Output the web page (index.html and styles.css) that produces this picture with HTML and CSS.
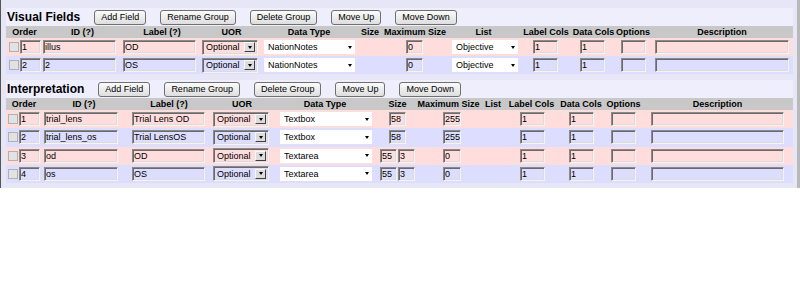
FILE: index.html
```html
<!DOCTYPE html>
<html>
<head>
<meta charset="utf-8">
<title>Layout Editor</title>
<link rel="stylesheet" href="styles.css">
</head>
<body>
<div class="frame">
  <div class="group">
    <div class="group-head">
      <span class="group-title">Visual Fields</span>
      <button class="btn">Add Field</button>
      <button class="btn">Rename Group</button>
      <button class="btn">Delete Group</button>
      <button class="btn">Move Up</button>
      <button class="btn">Move Down</button>
    </div>
    <table class="fields vf">
      <thead>
        <tr>
          <th class="c-ord">Order</th><th class="c-id">ID (?)</th><th class="c-label">Label (?)</th><th class="c-uor">UOR</th><th class="c-type">Data Type</th><th class="c-size">Size</th><th class="c-max">Maximum Size</th><th class="c-list">List</th><th class="c-lcols">Label Cols</th><th class="c-dcols">Data Cols</th><th class="c-opts">Options</th><th class="c-desc">Description</th>
        </tr>
      </thead>
      <tbody>
        <tr class="row-a">
          <td class="c-ord"><input type="checkbox" class="chk"><input class="in in-ord" value="1"></td>
          <td class="c-id"><input class="in in-id" value="illus"></td>
          <td class="c-label"><input class="in in-label" value="OD"></td>
          <td class="c-uor"><span class="combo"><select class="combo-sel"><option>Optional</option></select><span class="combo-btn"><span class="tri"></span></span></span></td>
          <td class="c-type"><span class="dd dd-type"><select class="dd-sel"><option>NationNotes</option></select><span class="tri"></span></span></td>
          <td class="c-size"></td>
          <td class="c-max"><input class="in in-max" value="0"></td>
          <td class="c-list"><span class="dd dd-list"><select class="dd-sel"><option>Objective</option></select><span class="tri"></span></span></td>
          <td class="c-lcols"><input class="in in-small" value="1"></td>
          <td class="c-dcols"><input class="in in-small" value="1"></td>
          <td class="c-opts"><input class="in in-small" value=""></td>
          <td class="c-desc"><input class="in in-desc" value=""></td>
        </tr>
        <tr class="row-b">
          <td class="c-ord"><input type="checkbox" class="chk"><input class="in in-ord" value="2"></td>
          <td class="c-id"><input class="in in-id" value="2"></td>
          <td class="c-label"><input class="in in-label" value="OS"></td>
          <td class="c-uor"><span class="combo"><select class="combo-sel"><option>Optional</option></select><span class="combo-btn"><span class="tri"></span></span></span></td>
          <td class="c-type"><span class="dd dd-type"><select class="dd-sel"><option>NationNotes</option></select><span class="tri"></span></span></td>
          <td class="c-size"></td>
          <td class="c-max"><input class="in in-max" value="0"></td>
          <td class="c-list"><span class="dd dd-list"><select class="dd-sel"><option>Objective</option></select><span class="tri"></span></span></td>
          <td class="c-lcols"><input class="in in-small" value="1"></td>
          <td class="c-dcols"><input class="in in-small" value="1"></td>
          <td class="c-opts"><input class="in in-small" value=""></td>
          <td class="c-desc"><input class="in in-desc" value=""></td>
        </tr>
      </tbody>
    </table>
  </div>

  <div class="group group-second">
    <div class="group-head">
      <span class="group-title">Interpretation</span>
      <button class="btn">Add Field</button>
      <button class="btn">Rename Group</button>
      <button class="btn">Delete Group</button>
      <button class="btn">Move Up</button>
      <button class="btn">Move Down</button>
    </div>
    <table class="fields ip">
      <thead>
        <tr>
          <th class="c-ord">Order</th><th class="c-id">ID (?)</th><th class="c-label">Label (?)</th><th class="c-uor">UOR</th><th class="c-type">Data Type</th><th class="c-size">Size</th><th class="c-max">Maximum Size</th><th class="c-list">List</th><th class="c-lcols">Label Cols</th><th class="c-dcols">Data Cols</th><th class="c-opts">Options</th><th class="c-desc">Description</th>
        </tr>
      </thead>
      <tbody>
        <tr class="row-a">
          <td class="c-ord"><input type="checkbox" class="chk"><input class="in in-ord" value="1"></td>
          <td class="c-id"><input class="in in-id" value="trial_lens"></td>
          <td class="c-label"><input class="in in-label" value="Trial Lens OD"></td>
          <td class="c-uor"><span class="combo"><select class="combo-sel"><option>Optional</option></select><span class="combo-btn"><span class="tri"></span></span></span></td>
          <td class="c-type"><span class="dd dd-type"><select class="dd-sel"><option>Textbox</option></select><span class="tri"></span></span></td>
          <td class="c-size"><input class="in in-size" value="58"></td>
          <td class="c-max"><input class="in in-max" value="255"></td>
          <td class="c-list"></td>
          <td class="c-lcols"><input class="in in-small" value="1"></td>
          <td class="c-dcols"><input class="in in-small" value="1"></td>
          <td class="c-opts"><input class="in in-small" value=""></td>
          <td class="c-desc"><input class="in in-desc" value=""></td>
        </tr>
        <tr class="row-b">
          <td class="c-ord"><input type="checkbox" class="chk"><input class="in in-ord" value="2"></td>
          <td class="c-id"><input class="in in-id" value="trial_lens_os"></td>
          <td class="c-label"><input class="in in-label" value="Trial LensOS"></td>
          <td class="c-uor"><span class="combo"><select class="combo-sel"><option>Optional</option></select><span class="combo-btn"><span class="tri"></span></span></span></td>
          <td class="c-type"><span class="dd dd-type"><select class="dd-sel"><option>Textbox</option></select><span class="tri"></span></span></td>
          <td class="c-size"><input class="in in-size" value="58"></td>
          <td class="c-max"><input class="in in-max" value="255"></td>
          <td class="c-list"></td>
          <td class="c-lcols"><input class="in in-small" value="1"></td>
          <td class="c-dcols"><input class="in in-small" value="1"></td>
          <td class="c-opts"><input class="in in-small" value=""></td>
          <td class="c-desc"><input class="in in-desc" value=""></td>
        </tr>
        <tr class="row-a">
          <td class="c-ord"><input type="checkbox" class="chk"><input class="in in-ord" value="3"></td>
          <td class="c-id"><input class="in in-id" value="od"></td>
          <td class="c-label"><input class="in in-label" value="OD"></td>
          <td class="c-uor"><span class="combo"><select class="combo-sel"><option>Optional</option></select><span class="combo-btn"><span class="tri"></span></span></span></td>
          <td class="c-type"><span class="dd dd-type"><select class="dd-sel"><option>Textarea</option></select><span class="tri"></span></span></td>
          <td class="c-size"><span class="size-pair"><input class="in in-size" value="55"><input class="in in-size" value="3"></span></td>
          <td class="c-max"><input class="in in-max" value="0"></td>
          <td class="c-list"></td>
          <td class="c-lcols"><input class="in in-small" value="1"></td>
          <td class="c-dcols"><input class="in in-small" value="1"></td>
          <td class="c-opts"><input class="in in-small" value=""></td>
          <td class="c-desc"><input class="in in-desc" value=""></td>
        </tr>
        <tr class="row-b">
          <td class="c-ord"><input type="checkbox" class="chk"><input class="in in-ord" value="4"></td>
          <td class="c-id"><input class="in in-id" value="os"></td>
          <td class="c-label"><input class="in in-label" value="OS"></td>
          <td class="c-uor"><span class="combo"><select class="combo-sel"><option>Optional</option></select><span class="combo-btn"><span class="tri"></span></span></span></td>
          <td class="c-type"><span class="dd dd-type"><select class="dd-sel"><option>Textarea</option></select><span class="tri"></span></span></td>
          <td class="c-size"><span class="size-pair"><input class="in in-size" value="55"><input class="in in-size" value="3"></span></td>
          <td class="c-max"><input class="in in-max" value="0"></td>
          <td class="c-list"></td>
          <td class="c-lcols"><input class="in in-small" value="1"></td>
          <td class="c-dcols"><input class="in in-small" value="1"></td>
          <td class="c-opts"><input class="in in-small" value=""></td>
          <td class="c-desc"><input class="in in-desc" value=""></td>
        </tr>
      </tbody>
    </table>
  </div>
</div>
</body>
</html>
```

FILE: styles.css
```css
* { box-sizing: border-box; }

body {
  margin: 0;
  background: #ffffff;
  font-family: "Liberation Sans", Arial, sans-serif;
  color: #000;
}

.frame {
  width: 800px;
  background: #e6e6f6;
  border-left: 1px solid #555;
  border-right: 3px solid #b8b8b8;
  padding: 8px 4px 5px 5px;
}

.group {
  background: #eeeefc;
}

.group-second {
  margin-top: 6px;
}

.group-head {
  display: flex;
  align-items: center;
  height: 18px;
  padding-left: 1px;
  gap: 14px;
}

.group-title {
  font-weight: bold;
  font-size: 12px;
  line-height: 14px;
}

.btn {
  height: 15px;
  padding: 0 6px;
  border: 1px solid #707070;
  border-radius: 3px;
  background: linear-gradient(#fbfbfb, #dedede);
  font-family: "Liberation Sans", Arial, sans-serif;
  font-size: 9px;
  line-height: 13px;
  color: #000;
}

.fields {
  border-collapse: collapse;
  table-layout: fixed;
  width: 787px;
}

.fields th {
  background: #c8c8c8;
  font-size: 9px;
  font-weight: bold;
  height: 12px;
  padding: 0;
  text-align: center;
  white-space: nowrap;
  line-height: 12px;
}

.fields td {
  height: 18px;
  padding: 0;
  text-align: left;
  white-space: nowrap;
  vertical-align: middle;
  font-size: 0;
}

.ip td { height: 18.25px; }

.row-a { background: #ffdddd; }
.row-b { background: #ddddff; }

/* inputs */
.in {
  display: inline-block;
  vertical-align: middle;
  height: 14px;
  margin: 0;
  padding: 0 0 0 1px;
  border: 1px solid;
  border-color: #8a8a8a #f4f4f4 #f4f4f4 #8a8a8a;
  box-shadow: inset 1px 1px 0 #6a6a6a, inset -1px -1px 0 #dcdcdc;
  background: transparent;
  font-family: "Liberation Sans", Arial, sans-serif;
  font-size: 9px;
  line-height: 12px;
  color: #000;
  outline: none;
}

.chk {
  -webkit-appearance: none;
  appearance: none;
  display: inline-block;
  vertical-align: middle;
  width: 10px;
  height: 10px;
  margin: 0 1px 0 0;
  border: 1px solid #b0b0b0;
  background: #e2e2e2;
}

.in-ord { width: 21px; }
.in-id { width: 73px; }
.in-label { width: 73px; }
.in-max { width: 17px; }
.in-small { width: 25px; }
.in-desc { width: 134px; }
.in-size { width: 17px; }

.size-pair { display: inline-flex; gap: 1px; vertical-align: middle; }

/* combo (UOR) */
.combo {
  display: inline-flex;
  align-items: center;
  vertical-align: middle;
  width: 56px;
  height: 15px;
  border: 1px solid;
  border-color: #8a8a8a #f4f4f4 #f4f4f4 #8a8a8a;
  box-shadow: inset 1px 1px 0 #6a6a6a, inset -1px -1px 0 #dcdcdc;
  padding: 1px 2px 1px 1px;
}

.combo-sel {
  -webkit-appearance: none;
  appearance: none;
  flex: 1;
  min-width: 0;
  height: 12px;
  border: 0;
  background: transparent;
  padding: 0 0 0 2px;
  margin: 0;
  font-family: "Liberation Sans", Arial, sans-serif;
  font-size: 9px;
  line-height: 12px;
  color: #000;
}

.combo-btn {
  display: flex;
  align-items: center;
  justify-content: center;
  width: 11px;
  height: 10px;
  border: 1px solid;
  border-color: #f8f8f8 #404040 #404040 #f8f8f8;
  background: #dcdcdc;
}

.tri {
  display: inline-block;
  width: 0;
  height: 0;
  border-left: 2.5px solid transparent;
  border-right: 2.5px solid transparent;
  border-top: 3px solid #000;
}

/* plain white dropdowns */
.dd {
  display: inline-flex;
  align-items: center;
  vertical-align: middle;
  height: 14px;
  background: #fff;
  padding-right: 3px;
}

.dd-sel {
  -webkit-appearance: none;
  appearance: none;
  flex: 1;
  min-width: 0;
  height: 14px;
  border: 0;
  background: transparent;
  padding: 0 0 0 4px;
  margin: 0;
  font-family: "Liberation Sans", Arial, sans-serif;
  font-size: 9px;
  line-height: 14px;
  color: #000;
}

.dd-type { width: 91px; }
.dd-list { width: 66px; }

/* column widths & offsets: Visual Fields */
.vf .c-ord { width: 37px; }
.vf .c-id { width: 79px; }
.vf .c-label { width: 80px; }
.vf .c-uor { width: 59px; }
.vf .c-type { width: 96px; }
.vf .c-size { width: 26px; }
.vf .c-max { width: 64px; }
.vf .c-list { width: 73px; }
.vf .c-lcols { width: 52px; }
.vf .c-dcols { width: 43px; }
.vf .c-opts { width: 36px; }
.vf .c-desc { width: 142px; }

.vf td.c-ord { padding-left: 3px; }
.vf td.c-label { padding-left: 1px; }
.vf td.c-type { padding-left: 3px; }
.vf td.c-max { padding-left: 23px; }
.vf td.c-list { padding-left: 5px; }
.vf td.c-lcols { padding-left: 13px; }
.vf td.c-dcols { padding-left: 8px; }
.vf td.c-opts { padding-left: 6px; }
.vf td.c-desc { padding-left: 4px; }

/* column widths & offsets: Interpretation */
.ip .c-ord { width: 36px; }
.ip .c-id { width: 84px; }
.ip .c-label { width: 86px; }
.ip .c-uor { width: 60px; }
.ip .c-type { width: 106px; }
.ip .c-size { width: 39px; }
.ip .c-max { width: 63px; }
.ip .c-list { width: 26px; }
.ip .c-lcols { width: 51px; }
.ip .c-dcols { width: 48px; }
.ip .c-opts { width: 37px; }
.ip .c-desc { width: 151px; }

.ip td.c-ord { padding-left: 2px; }
.ip td.c-id { padding-left: 2px; }
.ip td.c-label { padding-left: 6px; }
.ip td.c-uor { padding-left: 1px; }
.ip td.c-type { padding-left: 8px; }
.ip td.c-size { text-align: center; }
.ip td.c-max { padding-left: 26px; }
.ip td.c-lcols { padding-left: 14px; }
.ip td.c-dcols { padding-left: 12px; }
.ip td.c-opts { padding-left: 6px; }
.ip td.c-desc { padding-left: 9px; }

.ip .in-id { width: 74px; }
.ip .dd-type { width: 92px; }
.ip .in-max { width: 18px; }
.ip .in-desc { width: 133px; }
```
